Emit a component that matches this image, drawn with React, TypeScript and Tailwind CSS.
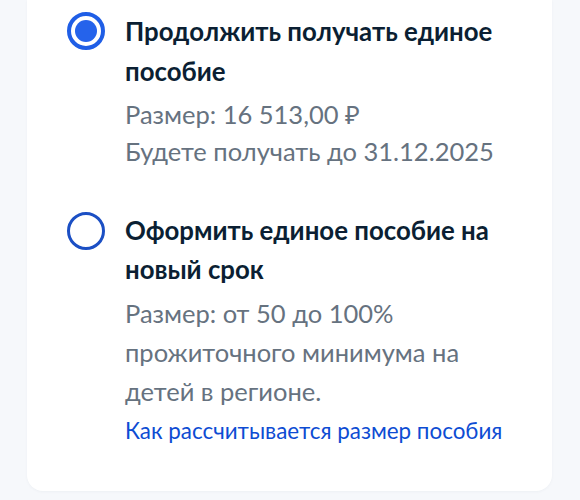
function Radio({ checked }: { checked: boolean }) {
  return (
    <div
      className={
        checked
          ? "w-[38px] h-[38px] shrink-0 rounded-full border-[4px] border-[#1f5ee6] flex items-center justify-center"
          : "w-[38px] h-[38px] shrink-0 rounded-full border-[3.5px] border-[#1b4fc4]"
      }
    >
      {checked && <div className="w-[22px] h-[22px] rounded-full bg-[#2563eb]" />}
    </div>
  );
}

export default function App() {
  return (
    <div
      className="min-h-[500px] bg-[#f6f8fb] px-[27px] pb-3 flex flex-col"
      style={{ fontFamily: "Lato, 'Noto Sans', sans-serif" }}
    >
      <div className="bg-white rounded-b-2xl pl-[40px] pr-4 pt-[12px] pb-[40px] w-[525px] shadow-[0_1px_3px_rgba(20,40,80,0.04)]">
        {/* Option 1 */}
        <div className="flex gap-[20px]">
          <Radio checked />
          <div className="-mt-[1px]">
            <div className="text-[25.8px] leading-[40px] font-bold text-[#0b1f33]">
              Продолжить получать единое
              <br />
              пособие
            </div>
            <div className="text-[25.5px] leading-[37px] text-[#66727f] mt-[5px]">
              <div>Размер: 16 513,00 ₽</div>
              <div>Будете получать до 31.12.2025</div>
            </div>
          </div>
        </div>

        {/* Option 2 */}
        <div className="flex gap-[20px] mt-[42px]">
          <Radio checked={false} />
          <div className="-mt-[1px]">
            <div className="text-[25.8px] leading-[39px] font-bold text-[#0b1f33]">
              Оформить единое пособие на
              <br />
              новый срок
            </div>
            <div className="text-[25.5px] leading-[39px] text-[#66727f] mt-[5px]">
              Размер: от 50 до 100%
              <br />
              прожиточного минимума на
              <br />
              детей в регионе.
            </div>
            <a className="block text-[22.4px] leading-[40px] text-[#0d4cd3]" href="#">
              Как рассчитывается размер пособия
            </a>
          </div>
        </div>
      </div>
    </div>
  );
}
